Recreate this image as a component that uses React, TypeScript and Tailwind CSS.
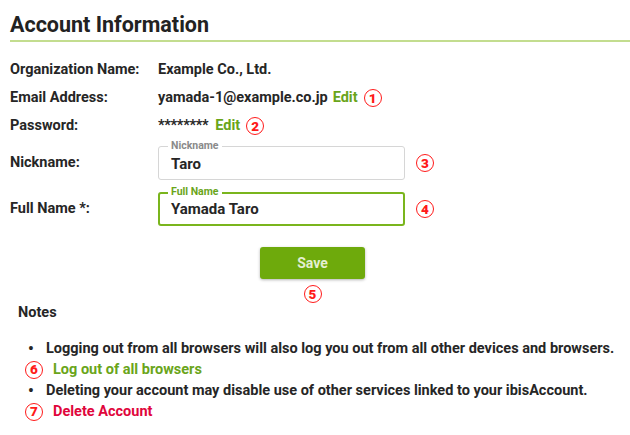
const Num = ({ n, className = '' }: { n: string; className?: string }) => (
  <span
    className={`inline-flex h-[18px] w-[18px] items-center justify-center rounded-full border-[1.5px] border-[#ff1a1a] pt-[1px] text-[13.5px] font-black leading-none text-[#ff1a1a] ${className}`}
  >
    {n}
  </span>
);

function InfoRow({ label, children }: { label: string; children: React.ReactNode }) {
  return (
    <div className="flex h-[28px] items-center">
      <div className="w-[148px]">{label}</div>
      <div className="flex items-center">{children}</div>
    </div>
  );
}

function Field({
  label,
  legend,
  value,
  focused,
  num,
}: {
  label: string;
  legend: string;
  value: string;
  focused?: boolean;
  num: string;
}) {
  return (
    <div className="flex items-center">
      <div className="w-[148px]">{label}</div>
      <div
        className={`relative h-[34px] w-[247px] rounded-[3px] bg-white ${
          focused ? 'border-2 border-[#7ab51d]' : 'border border-[#d6d6d6]'
        }`}
      >
        <span
          className={`absolute bg-white px-[3px] text-[10.5px] leading-[12px] ${
            focused ? 'left-[8px] top-[-8px] text-[#6aa51a]' : 'left-[9px] top-[-7px] text-[#8a8a8a]'
          }`}
        >
          {legend}
        </span>
        <div
          className={`flex h-full items-center text-[15px] ${
            focused ? 'pl-[11px] pt-[1px]' : 'pl-[12px] pt-[2px]'
          }`}
        >
          {value}
        </div>
      </div>
      <Num n={num} className="ml-[11px]" />
    </div>
  );
}

export default function App() {
  return (
    <div
      className="min-h-[435px] w-[630px] bg-white text-[14.5px] font-bold text-[#262626]"
      style={{ fontFamily: 'Roboto, "Noto Sans", sans-serif' }}
    >
      <div className="pl-[10px]">
        <h2 className="border-b-2 border-[#c3dd8f] pb-[3px] pt-[12px] text-[21.5px] leading-[25px] font-bold text-[#222]">
          Account Information
        </h2>

        <div className="mt-[14px] flex flex-col">
          <InfoRow label="Organization Name:">Example Co., Ltd.</InfoRow>
          <InfoRow label="Email Address:">
            <span>yamada-1@example.co.jp</span>
            <span className="ml-[5px] text-[#6aa51a]">Edit</span>
            <Num n="1" className="ml-[6px]" />
          </InfoRow>
          <InfoRow label="Password:">
            <span className="tracking-[-0.3px]">********</span>
            <span className="ml-[7px] text-[#6aa51a]">Edit</span>
            <Num n="2" className="ml-[6px]" />
          </InfoRow>
        </div>

        <div className="mt-[6px] flex flex-col gap-[12px]">
          <Field label="Nickname:" legend="Nickname" value="Taro" num="3" />
          <Field label="Full Name *:" legend="Full Name" value="Yamada Taro" focused num="4" />
        </div>

        <div className="ml-[250px] mt-[21px] flex w-[105px] flex-col items-center">
          <button className="h-[32px] w-[105px] rounded-[3px] bg-[#6eaa0c] text-[14px] font-bold text-[#e4efd2] shadow-[0_1px_3px_rgba(0,0,0,0.3)]">
            Save
          </button>
          <Num n="5" className="mt-[6px]" />
        </div>
      </div>

      <div className="pl-[18px]">
        <div className="leading-[20px]">Notes</div>
        <ul className="mt-[15px] flex flex-col">
          <li className="flex h-[21px] items-center pl-[10px]">
            <span className="w-[18px] text-[16px]">•</span>
            Logging out from all browsers will also log you out from all other devices and browsers.
          </li>
          <li className="flex h-[21px] items-center pl-[7px]">
            <Num n="6" />
            <span className="ml-[10px] text-[#6aa51a]">Log out of all browsers</span>
          </li>
          <li className="flex h-[21px] items-center pl-[10px]">
            <span className="w-[18px] text-[16px]">•</span>
            Deleting your account may disable use of other services linked to your ibisAccount.
          </li>
          <li className="flex h-[21px] items-center pl-[7px]">
            <Num n="7" />
            <span className="ml-[10px] text-[#e0063c]">Delete Account</span>
          </li>
        </ul>
      </div>
    </div>
  );
}
